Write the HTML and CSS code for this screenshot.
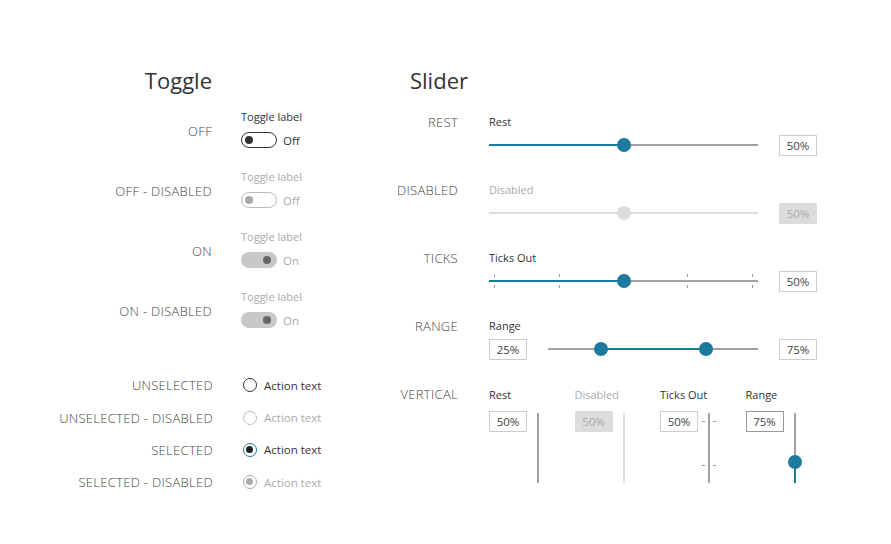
FILE: index.html
```html
<!DOCTYPE html>
<html>
<head>
<meta charset="utf-8">
<link rel="stylesheet" href="styles.css">
</head>
<body>
<div class="page">
  <section class="toggles">
    <h2 class="title title-toggle">Toggle</h2>
    <div class="t-row">
      <div class="rlabel">OFF</div>
      <div class="ctrl">
        <div class="cap">Toggle label</div>
        <div class="sw-line"><span class="switch off"><span class="knob"></span></span><span class="swtext">Off</span></div>
      </div>
    </div>
    <div class="t-row">
      <div class="rlabel">OFF - DISABLED</div>
      <div class="ctrl dis">
        <div class="cap">Toggle label</div>
        <div class="sw-line"><span class="switch off"><span class="knob"></span></span><span class="swtext">Off</span></div>
      </div>
    </div>
    <div class="t-row">
      <div class="rlabel">ON</div>
      <div class="ctrl dis">
        <div class="cap">Toggle label</div>
        <div class="sw-line"><span class="switch on"><span class="knob"></span></span><span class="swtext">On</span></div>
      </div>
    </div>
    <div class="t-row">
      <div class="rlabel">ON - DISABLED</div>
      <div class="ctrl dis">
        <div class="cap">Toggle label</div>
        <div class="sw-line"><span class="switch on"><span class="knob"></span></span><span class="swtext">On</span></div>
      </div>
    </div>

    <div class="radios">
      <div class="r-row">
        <div class="rlabel">UNSELECTED</div>
        <div class="radio"><span class="circle"></span>Action text</div>
      </div>
      <div class="r-row">
        <div class="rlabel">UNSELECTED - DISABLED</div>
        <div class="radio dis"><span class="circle"></span>Action text</div>
      </div>
      <div class="r-row">
        <div class="rlabel">SELECTED</div>
        <div class="radio sel"><span class="circle"></span>Action text</div>
      </div>
      <div class="r-row">
        <div class="rlabel">SELECTED - DISABLED</div>
        <div class="radio sel dis"><span class="circle"></span>Action text</div>
      </div>
    </div>
  </section>

  <section class="sliders">
    <h2 class="title title-slider">Slider</h2>

    <div class="s-row">
      <div class="rlabel">REST</div>
      <div class="s-ctrl">
        <div class="cap">Rest</div>
        <div class="s-line">
          <div class="track">
            <span class="fill" style="left:0;width:50%"></span>
            <span class="thumb" style="left:50%"></span>
          </div>
          <span class="vbox">50%</span>
        </div>
      </div>
    </div>

    <div class="s-row">
      <div class="rlabel">DISABLED</div>
      <div class="s-ctrl dis">
        <div class="cap">Disabled</div>
        <div class="s-line">
          <div class="track">
            <span class="thumb" style="left:50%"></span>
          </div>
          <span class="vbox">50%</span>
        </div>
      </div>
    </div>

    <div class="s-row">
      <div class="rlabel">TICKS</div>
      <div class="s-ctrl">
        <div class="cap">Ticks Out</div>
        <div class="s-line">
          <div class="track ticks">
            <span class="tick" style="left:5px"></span>
            <span class="tick" style="left:70px"></span>
            <span class="tick" style="left:198px"></span>
            <span class="tick" style="left:263px"></span>
            <span class="fill" style="left:0;width:50%"></span>
            <span class="thumb" style="left:50%"></span>
          </div>
          <span class="vbox">50%</span>
        </div>
      </div>
    </div>

    <div class="s-row">
      <div class="rlabel">RANGE</div>
      <div class="s-ctrl">
        <div class="cap">Range</div>
        <div class="s-line">
          <span class="vbox">25%</span>
          <div class="track short">
            <span class="fill" style="left:25%;width:50%"></span>
            <span class="thumb" style="left:25%"></span>
            <span class="thumb" style="left:75%"></span>
          </div>
          <span class="vbox">75%</span>
        </div>
      </div>
    </div>

    <div class="s-row">
      <div class="rlabel">VERTICAL</div>
      <div class="v-grid">
        <div class="v-col">
          <div class="cap">Rest</div>
          <div class="v-line">
            <span class="vbox">50%</span>
            <div class="vtrack"></div>
          </div>
        </div>
        <div class="v-col dis">
          <div class="cap">Disabled</div>
          <div class="v-line">
            <span class="vbox">50%</span>
            <div class="vtrack"></div>
          </div>
        </div>
        <div class="v-col">
          <div class="cap">Ticks Out</div>
          <div class="v-line">
            <span class="vbox">50%</span>
            <div class="vtrack">
              <span class="htick" style="top:8px"></span>
              <span class="htick" style="top:52px"></span>
            </div>
          </div>
        </div>
        <div class="v-col">
          <div class="cap">Range</div>
          <div class="v-line">
            <span class="vbox dark">75%</span>
            <div class="vtrack">
              <span class="vfill" style="top:49px;bottom:0"></span>
              <span class="vthumb" style="top:49px"></span>
            </div>
          </div>
        </div>
      </div>
    </div>
  </section>
</div>
</body>
</html>
```

FILE: styles.css
```css
* { box-sizing: border-box; }
html, body { margin: 0; padding: 0; background: #fff; }
body {
  font-family: "Open Sans", "Noto Sans", sans-serif;
  color: #333;
  width: 891px;
  height: 544px;
  overflow: hidden;
}
.page {
  display: flex;
  padding-top: 65px;
}
.title {
  margin: 0;
  font-size: 22px;
  font-weight: 400;
  line-height: 30px;
  color: #333;
}
.toggles { width: 350px; }
.title-toggle { width: 212px; text-align: right; margin-bottom: 14px; }
.rlabel {
  font-size: 13px;
  font-weight: 300;
  color: #444;
  line-height: 16px;
  text-align: right;
  letter-spacing: 0.3px;
}
.t-row {
  display: grid;
  grid-template-columns: 212px auto;
  column-gap: 29px;
  height: 60px;
}
.t-row .rlabel { margin-top: 14px; }
.cap {
  font-size: 11px;
  line-height: 16px;
  color: #333;
}
.dis .cap, .dis .swtext { color: #aaa; }
.sw-line {
  display: flex;
  align-items: center;
  margin-top: 7px;
  height: 16px;
}
.switch {
  position: relative;
  width: 36px;
  height: 16px;
  border-radius: 8px;
  border: 1.5px solid #333;
  flex: none;
}
.switch .knob {
  position: absolute;
  top: 2.5px;
  left: 3px;
  width: 8px;
  height: 8px;
  border-radius: 50%;
  background: #333;
}
.dis .switch.off { border-color: #bbb; }
.dis .switch.off .knob { background: #aaa; }
.switch.on { border: none; background: #c8c8c8; }
.switch.on .knob { left: auto; right: 6px; top: 4px; background: #666; }
.swtext { font-size: 11.5px; margin-left: 6px; color: #333; }

.radios { margin-top: 20px; }
.r-row {
  display: grid;
  grid-template-columns: 213px auto;
  column-gap: 28px;
  height: 32.4px;
  align-items: center;
}
.radio {
  display: flex;
  align-items: center;
  font-size: 11.5px;
  color: #333;
}
.radio .circle {
  position: relative;
  width: 14px;
  height: 14px;
  margin-left: 2px;
  margin-right: 7px;
  border-radius: 50%;
  border: 1.5px solid #333;
}
.radio.dis { color: #aaa; }
.radio.dis .circle { border-color: #bbb; }
.radio.sel .circle { border-color: #1b7a9e; }
.radio.sel .circle::after {
  content: "";
  position: absolute;
  left: 2px; top: 2px;
  width: 7px; height: 7px;
  border-radius: 50%;
  background: #222;
}
.radio.sel.dis .circle { border-color: #aaa; }
.radio.sel.dis .circle::after { background: #aaa; }

.sliders { flex: 1; }
.title-slider { margin-left: 60px; margin-bottom: 19px; }
.s-row {
  display: grid;
  grid-template-columns: 108px auto;
  column-gap: 31px;
  height: 68px;
}
.s-ctrl { width: 328px; }
.s-line {
  display: flex;
  align-items: center;
  margin-top: 4px;
  height: 22px;
  gap: 21px;
}
.track {
  position: relative;
  width: 269px;
  height: 2px;
  background: #a0a0a0;
}
.track.short { width: 211px; }
.dis .track { background: #dcdcdc; }
.fill {
  position: absolute;
  top: 0;
  height: 2px;
  background: #1b7a9e;
}
.thumb {
  position: absolute;
  top: -6px;
  width: 14px;
  height: 14px;
  margin-left: -7px;
  border-radius: 50%;
  background: #1b7a9e;
}
.dis .thumb { background: #dcdcdc; }
.tick {
  position: absolute;
  top: -6px;
  width: 1px;
  height: 14px;
  background: linear-gradient(#999 0 3px, transparent 3px 11px, #999 11px 14px);
}
.vbox {
  flex: none;
  display: inline-flex;
  align-items: center;
  justify-content: center;
  width: 38px;
  height: 21px;
  border: 1px solid #ccc;
  font-size: 11.5px;
  color: #444;
  background: #fff;
}
.vbox.dark { border-color: #999; }
.dis .vbox { background: #dcdcdc; border-color: #dcdcdc; color: #aaa; }

.v-grid {
  display: grid;
  grid-template-columns: repeat(4, 85.5px);
  height: 100px;
}
.v-col .cap { margin-top: 1px; }
.v-line {
  display: flex;
  align-items: flex-start;
  margin-top: 8px;
  gap: 10px;
}
.vtrack {
  position: relative;
  margin-top: 2px;
  width: 2px;
  height: 70px;
  background: #a0a0a0;
}
.dis .vtrack { background: #dcdcdc; }
.htick {
  position: absolute;
  left: -6px;
  width: 14px;
  height: 1px;
  background: linear-gradient(90deg, #999 0 3px, transparent 3px 11px, #999 11px 14px);
}
.vfill {
  position: absolute;
  left: 0;
  width: 2px;
  background: #1b7a9e;
}
.vthumb {
  position: absolute;
  left: -6px;
  width: 14px;
  height: 14px;
  margin-top: -7px;
  border-radius: 50%;
  background: #1b7a9e;
}
```
